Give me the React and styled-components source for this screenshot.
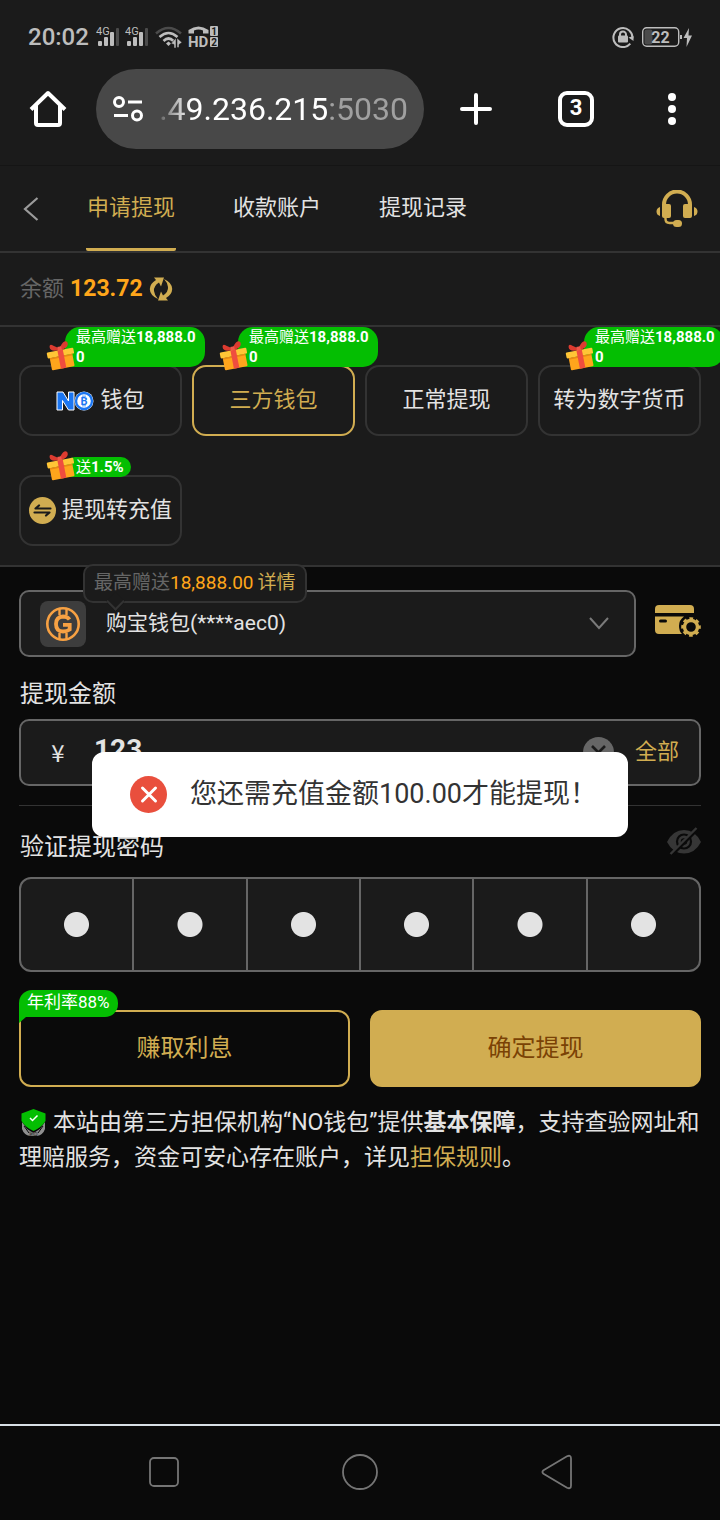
import React, { useState } from "react";
import styled, { createGlobalStyle, ThemeProvider } from "styled-components";

const theme = {
  colors: {
    page: "#0a0a0a",
    panel: "#1b1b1b",
    line: "#333333",
    border: "#666666",
    text: "#e3e3e3",
    muted: "#666666",
    gold: "#d1ad51",
    orange: "#ffa61a",
    green: "#04be02",
    white: "#ffffff",
    status: "#bdbdbd",
  },
};

const GlobalStyle = createGlobalStyle`
  * {
    box-sizing: border-box;
  }
  body {
    margin: 0;
    background: ${theme.colors.page};
    color: ${theme.colors.text};
    font-family: Roboto, "Noto Sans CJK SC", sans-serif;
    line-height: 1.2;
    overflow-x: hidden;
  }
  button, input, select {
    font-family: inherit;
    line-height: inherit;
    color: inherit;
    margin: 0;
  }
  button {
    padding: 0;
    border: 0;
    background: none;
    cursor: pointer;
  }
  svg {
    display: block;
    flex: none;
  }
`;

const Screen = styled.div`
  display: flex;
  flex-direction: column;
  min-height: 100vh;
  overflow: hidden;
`;

/* phone status bar */

const StatusBar = styled.div`
  display: flex;
  align-items: center;
  justify-content: space-between;
  height: 69px;
  padding: 4px 28px 0;
  background: ${({ theme }) => theme.colors.panel};
  color: ${({ theme }) => theme.colors.status};
`;

const StatusGroup = styled.div`
  display: flex;
  align-items: center;
  gap: ${({ $gap }) => $gap}px;
`;

const Clock = styled.span`
  margin-right: 1px;
  font-size: 24px;
  font-weight: 500;
  line-height: 28px;
`;

/* browser toolbar */

const BrowserBar = styled.div`
  display: flex;
  align-items: center;
  height: 97px;
  padding: 0 24px 17px 24px;
  border-bottom: 1px solid #151515;
  background: ${({ theme }) => theme.colors.panel};
  color: ${({ theme }) => theme.colors.white};
`;

const BarButton = styled.button`
  display: flex;
  align-items: center;
  justify-content: center;
  width: 48px;
  height: 48px;
`;

const AddressBar = styled.button`
  display: flex;
  align-items: center;
  justify-content: space-between;
  flex: 1;
  height: 80px;
  margin: 0 28px 0 24px;
  padding: 0 16px;
  border-radius: 40px;
  background: #484848;
`;

const Address = styled.span`
  font-size: 32px;
  line-height: 40px;
  mask-image: linear-gradient(to right, rgba(0, 0, 0, 0.15), #000 32px);
`;

const Port = styled.span`
  color: #a0a0a0;
`;

const BarActions = styled.div`
  display: flex;
  gap: 52px;
`;

const ActionGap = styled.div`
  display: flex;
  gap: 48px;
`;

const TabCount = styled.span`
  display: flex;
  align-items: center;
  justify-content: center;
  width: 36px;
  height: 36px;
  border: 4px solid;
  border-radius: 9px;
  font-size: 22px;
  font-weight: 700;
`;

/* page */

const WebView = styled.main`
  position: relative;
  flex: 1;
`;

const Header = styled.header`
  display: flex;
  align-items: center;
  height: 87px;
  padding: 0 22px 0 23px;
  border-bottom: 2px solid ${({ theme }) => theme.colors.line};
  background: ${({ theme }) => theme.colors.panel};
`;

const BackButton = styled.button`
  width: 16px;
`;

const Tabs = styled.nav`
  display: flex;
  flex: 1;
  gap: 56px;
  height: 100%;
  margin-left: 47px;
`;

const Tab = styled.a`
  display: flex;
  align-items: center;
  justify-content: center;
  width: 90px;
  border-top: 3px solid transparent;
  border-bottom: 3px solid ${({ theme, $active }) => ($active ? theme.colors.gold : "transparent")};
  border-radius: 2px;
  color: ${({ theme, $active }) => ($active ? theme.colors.gold : theme.colors.text)};
  font-size: 22px;
  text-decoration: none;
  white-space: nowrap;
`;

const Balance = styled.div`
  display: flex;
  align-items: center;
  gap: 6px;
  height: 74px;
  padding: 0 20px;
  border-bottom: 2px solid ${({ theme }) => theme.colors.line};
  background: ${({ theme }) => theme.colors.panel};
  color: ${({ theme }) => theme.colors.muted};
  font-size: 22px;
`;

const Amount = styled.strong`
  color: ${({ theme }) => theme.colors.orange};
  font-size: 23px;
`;

const Methods = styled.section`
  display: grid;
  grid-template-columns: repeat(4, 1fr);
  gap: 39px 10px;
  padding: 38px 19px 19px;
  border-bottom: 2px solid ${({ theme }) => theme.colors.line};
  background: ${({ theme }) => theme.colors.panel};
`;

const MethodCell = styled.div`
  position: relative;
`;

const MethodButton = styled.button`
  display: flex;
  align-items: center;
  justify-content: center;
  gap: 6px;
  width: 100%;
  height: 71px;
  border: 2px solid ${({ theme, $active }) => ($active ? theme.colors.gold : theme.colors.line)};
  border-radius: 14px;
  color: ${({ theme, $active }) => ($active ? theme.colors.gold : theme.colors.text)};
  font-size: 22px;
  white-space: nowrap;
`;

const Promo = styled.div`
  position: absolute;
  bottom: calc(100% - 2px);
  left: 46px;
  width: max-content;
  max-width: 140px;
  padding: 0 7px 0 11px;
  border-radius: 15px 15px 15px 0;
  background: ${({ theme }) => theme.colors.green};
  color: ${({ theme }) => theme.colors.white};
  font-size: 15px;
  line-height: 20px;
  word-break: break-all;
`;

const GiftBox = styled.span`
  position: absolute;
  bottom: -4px;
  left: -19px;
`;

const Form = styled.form`
  display: flex;
  flex-direction: column;
  padding: 23px 19px 0;
`;

const AccountRow = styled.div`
  position: relative;
  display: flex;
  align-items: center;
  gap: 19px;
`;

const ManageButton = styled.button`
  padding-bottom: 6px;
`;

const Field = styled.div`
  display: flex;
  align-items: center;
  flex: 1 0 auto;
  height: 67px;
  padding: 0 20px 0 19px;
  border: 2px solid ${({ theme }) => theme.colors.border};
  border-radius: 10px;
  background: ${({ theme }) => theme.colors.panel};
`;

const WalletBadge = styled.span`
  display: flex;
  align-items: center;
  justify-content: center;
  width: 46px;
  height: 46px;
  border-radius: 8px;
  background: #3d3d3d;
`;

const AccountSelect = styled.select`
  flex: 1;
  min-width: 0;
  height: 100%;
  padding: 0 20px;
  border: 0;
  outline: 0;
  appearance: none;
  background: none;
  font-size: 21px;
`;

const SelectArrow = styled.span`
  margin-right: 5px;
`;

const Tip = styled.div`
  position: absolute;
  top: -26px;
  left: 64px;
  display: flex;
  align-items: center;
  gap: 4px;
  height: 39px;
  padding: 0 9px;
  border: 2px solid ${({ theme }) => theme.colors.line};
  border-radius: 10px;
  background: ${({ theme }) => theme.colors.panel};
  color: ${({ theme }) => theme.colors.muted};
  font-size: 19px;
  white-space: nowrap;

  &::after {
    content: "";
    position: absolute;
    bottom: -7px;
    left: 24px;
    width: 11px;
    height: 11px;
    border: solid ${({ theme }) => theme.colors.line};
    border-width: 0 2px 2px 0;
    background: ${({ theme }) => theme.colors.panel};
    transform: rotate(45deg);
  }
`;

const TipAmount = styled.span`
  color: ${({ theme }) => theme.colors.orange};
`;

const GoldLink = styled.a`
  color: ${({ theme }) => theme.colors.gold};
  text-decoration: none;
`;

const FieldLabel = styled.label`
  padding: 20px 1px 8px;
  font-size: 24px;
  line-height: 34px;
`;

const Currency = styled.span`
  width: 36px;
  font-family: "Noto Sans CJK SC", sans-serif;
  font-size: 24px;
  text-align: center;
`;

const AmountInput = styled.input`
  flex: 1;
  min-width: 0;
  padding: 0 18px 6px;
  border: 0;
  outline: 0;
  background: none;
  font-size: 28px;
  font-weight: 700;
`;

const AllButton = styled.button`
  margin-left: 21px;
  color: ${({ theme }) => theme.colors.gold};
  font-size: 22px;
`;

const Divider = styled.hr`
  width: 100%;
  height: 1px;
  margin: 19px 0 4px;
  border: 0;
  background: ${({ theme }) => theme.colors.line};
`;

const LabelRow = styled.div`
  display: flex;
  align-items: center;
  justify-content: space-between;
  padding-bottom: 5px;
`;

const PinRow = styled.div`
  display: flex;
  height: 95px;
  border: 2px solid ${({ theme }) => theme.colors.border};
  border-radius: 12px;
  background: ${({ theme }) => theme.colors.panel};
`;

/* a filled cell shows one large dot in place of the digit */
const PinInput = styled.input`
  flex: 1;
  min-width: 0;
  padding: 0;
  border: 0;
  border-left: ${({ $first }) => ($first ? 0 : "2px")} solid ${({ theme }) => theme.colors.border};
  outline: 0;
  color: transparent;
  text-align: center;
  background: ${({ value }) => (value ? "radial-gradient(circle, #e3e3e3 12px, transparent 13px)" : "none")};
`;

const Actions = styled.div`
  display: grid;
  grid-template-columns: 1fr 1fr;
  gap: 20px;
  margin-top: 38px;
`;

const ActionCell = styled.div`
  position: relative;
`;

const ActionButton = styled.button`
  width: 100%;
  height: 77px;
  border: 2px solid ${({ theme }) => theme.colors.gold};
  border-radius: 12px;
  background: ${({ theme, $filled }) => ($filled ? theme.colors.gold : "none")};
  color: ${({ theme, $filled }) => ($filled ? "#7a4205" : theme.colors.gold)};
  font-size: 24px;
`;

const RateTag = styled.span`
  position: absolute;
  top: -20px;
  left: 0;
  height: 27px;
  padding: 0 8px;
  border-radius: 13px 13px 13px 0;
  background: ${({ theme }) => theme.colors.green};
  color: ${({ theme }) => theme.colors.white};
  font-size: 17px;
  line-height: 25px;

  &::after {
    content: "";
    position: absolute;
    top: 100%;
    left: 0;
    border-top: 6px solid ${({ theme }) => theme.colors.green};
    border-right: 7px solid transparent;
  }
`;

const Notice = styled.p`
  margin: 18px 0 0;
  font-size: 23px;
  line-height: 35px;

  & > svg {
    display: inline-block;
    margin: 0 7px 0 2px;
    vertical-align: -7px;
  }
`;

const ToastLayer = styled.div`
  position: absolute;
  inset: 0;
  display: flex;
  align-items: center;
  justify-content: center;
  padding-bottom: 2px;
  pointer-events: none;
`;

const Toast = styled.div`
  display: flex;
  align-items: center;
  gap: 23px;
  height: 85px;
  padding: 0 31px 0 38px;
  border-radius: 12px;
  background: ${({ theme }) => theme.colors.white};
  color: #333333;
  font-size: 27px;
  white-space: nowrap;
`;

/* system navigation */

const SystemNav = styled.nav`
  display: flex;
  align-items: center;
  justify-content: space-around;
  height: 96px;
  padding: 0 65px 2px 67px;
  border-top: 2px solid #d8dfe6;
`;

const SignalIcon = () => (
  <svg width="23" height="22" viewBox="0 0 23 22" fill="#bdbdbd">
    <text x="0" y="9" fontSize="11">4G</text>
    <rect x="2" y="15" width="4" height="5" rx="1" />
    <rect x="8" y="11" width="4" height="9" rx="1" />
    <rect x="14" y="6" width="4" height="14" rx="1" />
    <rect x="20" y="2" width="3" height="18" rx="1" fill="#4b4b4b" />
  </svg>
);

const WifiIcon = () => (
  <svg width="28" height="22" viewBox="0 0 28 22" fill="none" strokeWidth="2.600">
    <path d="M2 7.500Q14.500-3.500 27 7.500" stroke="#4b4b4b" />
    <path d="M5.500 11Q14.500 3 23.500 11" stroke="#bdbdbd" />
    <path d="M9.500 15Q14.500 10 19.500 15" stroke="#bdbdbd" />
    <path d="M12 17.500L14.500 15.500L17 17.500L14.500 20Z" fill="#bdbdbd" />
    <path d="M17 17.500L22 12V22H20V18.500ZM23 12L28 16.500L25 18.500V21.500H23Z" fill="#bdbdbd" stroke="#1b1b1b" strokeWidth="0.500" />
  </svg>
);

const HdIcon = () => (
  <svg width="31" height="24" viewBox="0 0 31 24">
    <path d="M0.500 8.500V5Q10.500-2 20.500 5V8.500H15V5.500Q10.500 3.500 6 5.500V8.500Z" fill="#bdbdbd" />
    <text x="0" y="22" fontSize="15" fontWeight="700" fill="#bdbdbd">HD</text>
    <rect x="22" y="1" width="8" height="10" rx="1" fill="#bdbdbd" />
    <rect x="22" y="12" width="8" height="10" rx="1" fill="#bdbdbd" />
    <text x="26" y="9.500" fontSize="10" fontWeight="700" textAnchor="middle" fill="#1b1b1b">1</text>
    <text x="26" y="20.500" fontSize="10" fontWeight="700" textAnchor="middle" fill="#1b1b1b">2</text>
  </svg>
);

const RotationLockIcon = () => (
  <svg width="22" height="22" viewBox="0 0 22 22" fill="none" stroke="#bdbdbd" strokeWidth="2">
    <path d="M18.300 17.600A9.500 9.500 0 1 1 20.400 12.500" />
    <path d="M16.500 11.500L21.500 10V15Z" fill="#bdbdbd" stroke="none" />
    <rect x="6" y="9.500" width="10" height="7" rx="1" fill="#bdbdbd" stroke="none" />
    <path d="M8 10V8.500A3 3 0 0 1 14 8.500V10" />
  </svg>
);

const BatteryIcon = () => (
  <svg width="50" height="22" viewBox="0 0 50 22">
    <rect x="0.700" y="1.700" width="36" height="18.600" rx="4" fill="none" stroke="#bdbdbd" strokeWidth="1.400" />
    <rect x="2.500" y="3.500" width="8" height="15" rx="2" fill="#4b4b4b" />
    <rect x="38" y="9" width="2" height="4" fill="#bdbdbd" />
    <text x="18.500" y="16.500" fontSize="16" fontWeight="700" textAnchor="middle" fill="#bdbdbd">22</text>
    <path d="M47 2L41.500 12H45L44.500 21L50 9.500H46.500Z" fill="#bdbdbd" />
  </svg>
);

const HomeIcon = () => (
  <svg width="38" height="38" viewBox="0 0 38 38" fill="none" stroke="#fff" strokeWidth="4" strokeLinejoin="round">
    <path d="M2 19.500L19 3L36 19.500M7 15.500V33Q7 35 9 35H29Q31 35 31 33V15.500" />
  </svg>
);

const SiteInfoIcon = () => (
  <svg width="32" height="28" viewBox="0 0 32 28" fill="none" stroke="#fff" strokeWidth="3">
    <circle cx="7" cy="7" r="4.500" />
    <path d="M16 7H30M2 20.500H16" />
    <circle cx="25" cy="20.500" r="4.500" />
  </svg>
);

const PlusIcon = () => (
  <svg width="32" height="32" viewBox="0 0 32 32" stroke="#fff" strokeWidth="4" strokeLinecap="round">
    <path d="M16 2V30M2 16H30" />
  </svg>
);

const MoreIcon = () => (
  <svg width="8" height="32" viewBox="0 0 8 32" fill="#fff">
    <circle cx="4" cy="4" r="4" />
    <circle cx="4" cy="16" r="4" />
    <circle cx="4" cy="28" r="4" />
  </svg>
);

const BackIcon = () => (
  <svg width="16" height="24" viewBox="0 0 16 24" fill="none" stroke="#9b9b9b" strokeWidth="2.200">
    <path d="M14.500 1L2 12L14.500 23" />
  </svg>
);

const HeadsetIcon = () => (
  <svg width="42" height="38" viewBox="0 0 42 38" fill="#d1ad51">
    <path d="M8 16V14.500A13 13 0 0 1 34 14.500V16" fill="none" stroke="#d1ad51" strokeWidth="4" />
    <rect x="6" y="14" width="9" height="14" rx="2" />
    <rect x="27" y="14" width="9" height="14" rx="2" />
    <path d="M4 17V26Q0.500 25 0.500 21.500Q0.500 18 4 17ZM38 17V26Q41.500 25 41.500 21.500Q41.500 18 38 17Z" />
    <path d="M9.500 27V29Q9.500 33 13.500 33H18" fill="none" stroke="#d1ad51" strokeWidth="2.400" />
    <rect x="17" y="30" width="9" height="7" rx="3.500" />
  </svg>
);

const RefreshIcon = () => (
  <svg width="24" height="24" viewBox="0 0 24 24" fill="#d1ad51">
    <path d="M5 0.500H15L12 9.500L10 5.500Q4.500 9 5 14Q5.500 18.500 9 22Q1 18.500 0.800 12Q1 6.500 7 3Z" />
    <path d="M19 23.500H9L12 14.500L14 18.500Q19.500 15 19 10Q18.500 5.500 15 2Q23 5.500 23.200 12Q23 17.500 17 21Z" />
  </svg>
);

const GiftIcon = () => (
  <svg width="30" height="30" viewBox="0 0 30 30">
    <g transform="rotate(-11 15 15)">
      <path d="M14 9Q5 9 5.500 4Q6 0.500 9.500 3.500Q13 5.500 14.500 8Q18 2.500 21 1.500Q24.500 1 24 4.500Q23 9 15 9Z" fill="#dd3b30" />
      <path d="M13 5.500H17V9.500H13Z" fill="#f0574a" />
      <rect x="3.500" y="15" width="23" height="12.500" rx="1" fill="#ffa51c" />
      <rect x="1.500" y="9" width="27" height="6" rx="1" fill="#ffc536" />
      <rect x="3.500" y="15" width="23" height="1.500" fill="#e88a13" />
      <rect x="12.500" y="9" width="5.500" height="18.500" fill="#ef4d3f" />
    </g>
  </svg>
);

const NoLogo = () => (
  <svg width="38" height="20" viewBox="0 0 38 20">
    <path d="M1 19V1H7L12.500 10V1H18V19H12.500L6.500 9.500V19Z" fill="#1b76f2" stroke="#fff" strokeWidth="1" />
    <circle cx="28" cy="10" r="9.500" fill="#fff" />
    <circle cx="28" cy="10" r="8" fill="none" stroke="#1b76f2" strokeWidth="2.400" />
    <text x="28" y="14" fontSize="11" fontWeight="700" textAnchor="middle" fill="#1b76f2">B</text>
    <path d="M27 4.500V6M29 4.500V6M27 14V15.500M29 14V15.500" stroke="#1b76f2" />
  </svg>
);

const SwapIcon = () => (
  <svg width="27" height="27" viewBox="0 0 27 27">
    <circle cx="13.500" cy="13.500" r="13.500" fill="#d1ad51" />
    <path d="M10 8.500L6.500 11.500H21.500M5.500 15.500H20.500L17 18.500" fill="none" stroke="#1b1b1b" strokeWidth="2.200" strokeLinejoin="round" strokeLinecap="round" />
  </svg>
);

const GCoinIcon = () => (
  <svg width="36" height="36" viewBox="0 0 36 36" fill="none" stroke="#f7a143">
    <circle cx="18" cy="18" r="15.700" strokeWidth="2.600" />
    <path d="M14.500 3V9M21.500 3V9M14.500 27V33M21.500 27V33" strokeWidth="2.400" />
    <path d="M24.500 13.500Q22.500 10.500 18 10.500Q11 11 11 18Q11 25.500 18 25.500Q22 25.500 24.700 23.500V18.800H18" strokeWidth="3.800" />
  </svg>
);

const ChevronIcon = () => (
  <svg width="20" height="13" viewBox="0 0 20 13" fill="none" stroke="#7a7a7a" strokeWidth="2">
    <path d="M1 1L10 11L19 1" />
  </svg>
);

const CardSettingsIcon = () => (
  <svg width="46" height="32" viewBox="0 0 46 32">
    <path d="M0 8V4Q0 0 4 0H35Q39 0 39 4V8Z" fill="#d1ad51" />
    <path d="M0 11.500H29Q24 15 24 21Q24 26 27 29H4Q0 29 0 25Z" fill="#d1ad51" />
    <rect x="4" y="14.500" width="8" height="3" rx="1.500" fill="#0a0a0a" />
    <circle cx="36" cy="22" r="6.500" fill="none" stroke="#d1ad51" strokeWidth="3.400" />
    <circle cx="36" cy="22" r="8.300" fill="none" stroke="#d1ad51" strokeWidth="3" strokeDasharray="3.600 2.919" strokeDashoffset="1.800" />
  </svg>
);

const ClearIcon = () => (
  <svg width="31" height="31" viewBox="0 0 31 31">
    <circle cx="15.500" cy="15.500" r="15.500" fill="#666" />
    <path d="M9 9L22 22M22 9L9 22" stroke="#1b1b1b" strokeWidth="2.600" />
  </svg>
);

const HiddenEyeIcon = () => (
  <svg width="34" height="28" viewBox="0 0 34 28">
    <path d="M0 15Q6 3 17 3Q28 3 34 15Q28 26.500 17 26.500Q6 26.500 0 15Z" fill="#363636" />
    <circle cx="17" cy="14.500" r="7" fill="none" stroke="#0a0a0a" strokeWidth="2.200" />
    <circle cx="17" cy="14.500" r="2.500" fill="none" stroke="#0a0a0a" strokeWidth="1.500" />
    <path d="M5 28L31 2" stroke="#0a0a0a" strokeWidth="3" />
    <path d="M3.500 27L29.500 1" stroke="#363636" strokeWidth="2.400" />
  </svg>
);

const ErrorIcon = () => (
  <svg width="37" height="37" viewBox="0 0 37 37">
    <circle cx="18.500" cy="18.500" r="18.500" fill="#e94f3d" />
    <path d="M12.500 12L25.500 25M25.500 12L12.500 25" stroke="#fff" strokeWidth="3" strokeLinecap="round" />
  </svg>
);

const ShieldIcon = () => (
  <svg width="25" height="28" viewBox="0 0 25 28">
    <path d="M1 13L6 20L12.500 24L19 20L24 13V20Q22 26 16 27H9Q3 26 1 20Z" fill="#8f8f8f" />
    <path d="M3 17L8 24M22 17L17 24" stroke="#0a0a0a" />
    <text x="12.500" y="27" fontSize="6" fontWeight="700" textAnchor="middle" fill="#d0d0d0" stroke="#0a0a0a" strokeWidth="0.400">NO</text>
    <path d="M12.500 0L24.500 4.500V12Q21 18 12.500 22Q4 18 0.500 12V4.500Z" fill="#04be02" />
    <path d="M9 9L11.500 11.500L16.500 6.500" fill="none" stroke="#fff" strokeWidth="1.500" />
  </svg>
);

const RecentsIcon = () => (
  <svg width="30" height="30" viewBox="0 0 30 30" fill="none" stroke="#757575" strokeWidth="1.800">
    <rect x="1" y="1" width="28" height="28" rx="4" />
  </svg>
);

const CircleIcon = () => (
  <svg width="36" height="36" viewBox="0 0 36 36" fill="none" stroke="#757575" strokeWidth="1.800">
    <circle cx="18" cy="18" r="17" />
  </svg>
);

const TriangleIcon = () => (
  <svg width="32" height="36" viewBox="0 0 32 36" fill="none" stroke="#757575" strokeWidth="1.800">
    <path d="M2.500 16.200L26 2.300Q30 0.500 30 4.500V31.500Q30 35.500 26 33.700L2.500 19.800Q0.300 18 2.500 16.200Z" />
  </svg>
);

const tabs = ["申请提现", "收款账户", "提现记录"];

const methods = [
  { label: "钱包", icon: <NoLogo />, promo: "最高赠送", value: "18,888.00" },
  { label: "三方钱包", promo: "最高赠送", value: "18,888.00" },
  { label: "正常提现" },
  { label: "转为数字货币", promo: "最高赠送", value: "18,888.00" },
  { label: "提现转充值", icon: <SwapIcon />, promo: "送", value: "1.5%" },
];

const App = () => {
  const [method, setMethod] = useState("三方钱包");
  const [amount, setAmount] = useState("123");
  const [pin, setPin] = useState(["1", "2", "3", "4", "5", "6"]);

  const updatePin = (index, value) => {
    setPin(pin.map((digit, i) => (i === index ? value : digit)));
  };

  return (
    <ThemeProvider theme={theme}>
      <GlobalStyle />
      <Screen>
        <StatusBar>
          <StatusGroup $gap={6}>
            <Clock>20:02</Clock>
            <SignalIcon />
            <SignalIcon />
            <WifiIcon />
            <HdIcon />
          </StatusGroup>
          <StatusGroup $gap={8}>
            <RotationLockIcon />
            <BatteryIcon />
          </StatusGroup>
        </StatusBar>

        <BrowserBar>
          <BarButton aria-label="Home">
            <HomeIcon />
          </BarButton>
          <AddressBar>
            <SiteInfoIcon />
            <Address>
              .49.236.215<Port>:5030</Port>
            </Address>
          </AddressBar>
          <BarActions>
            <BarButton aria-label="New tab">
              <PlusIcon />
            </BarButton>
            <ActionGap>
              <BarButton aria-label="Tabs">
                <TabCount>3</TabCount>
              </BarButton>
              <BarButton aria-label="More">
                <MoreIcon />
              </BarButton>
            </ActionGap>
          </BarActions>
        </BrowserBar>

        <WebView>
          <Header>
            <BackButton aria-label="返回">
              <BackIcon />
            </BackButton>
            <Tabs>
              {tabs.map((tab, index) => (
                <Tab key={tab} href="#" $active={index === 0}>
                  {tab}
                </Tab>
              ))}
            </Tabs>
            <button aria-label="客服">
              <HeadsetIcon />
            </button>
          </Header>

          <Balance>
            余额
            <Amount>123.72</Amount>
            <button aria-label="刷新">
              <RefreshIcon />
            </button>
          </Balance>

          <Methods>
            {methods.map((item) => (
              <MethodCell key={item.label}>
                <MethodButton $active={item.label === method} onClick={() => setMethod(item.label)}>
                  {item.icon}
                  {item.label}
                </MethodButton>
                {item.promo && (
                  <Promo>
                    <GiftBox>
                      <GiftIcon />
                    </GiftBox>
                    {item.promo}
                    <b>{item.value}</b>
                  </Promo>
                )}
              </MethodCell>
            ))}
          </Methods>

          <Form onSubmit={(e) => e.preventDefault()}>
            <AccountRow>
              <Field>
                <WalletBadge>
                  <GCoinIcon />
                </WalletBadge>
                <AccountSelect aria-label="收款账户">
                  <option>购宝钱包(****aec0)</option>
                </AccountSelect>
                <SelectArrow>
                  <ChevronIcon />
                </SelectArrow>
              </Field>
              <ManageButton type="button" aria-label="管理账户">
                <CardSettingsIcon />
              </ManageButton>
              <Tip>
                <span>
                  最高赠送<TipAmount>18,888.00</TipAmount>
                </span>
                <GoldLink href="#">详情</GoldLink>
              </Tip>
            </AccountRow>

            <FieldLabel htmlFor="amount">提现金额</FieldLabel>
            <Field>
              <Currency>¥</Currency>
              <AmountInput id="amount" value={amount} onChange={(e) => setAmount(e.target.value)} />
              <button type="button" aria-label="清除" onClick={() => setAmount("")}>
                <ClearIcon />
              </button>
              <AllButton type="button" onClick={() => setAmount("123")}>
                全部
              </AllButton>
            </Field>
            <Divider />

            <LabelRow>
              <FieldLabel htmlFor="pin-0">验证提现密码</FieldLabel>
              <button type="button" aria-label="显示密码">
                <HiddenEyeIcon />
              </button>
            </LabelRow>
            <PinRow>
              {pin.map((digit, index) => (
                <PinInput
                  key={index}
                  id={`pin-${index}`}
                  type="password"
                  maxLength={1}
                  aria-label={`密码 ${index + 1}`}
                  value={digit}
                  $first={index === 0}
                  onChange={(e) => updatePin(index, e.target.value)}
                />
              ))}
            </PinRow>

            <Actions>
              <ActionCell>
                <ActionButton type="button">赚取利息</ActionButton>
                <RateTag>年利率88%</RateTag>
              </ActionCell>
              <ActionButton $filled>确定提现</ActionButton>
            </Actions>

            <Notice>
              <ShieldIcon />
              本站由第三方担保机构“NO钱包”提供<b>基本保障</b>，支持查验网址和理赔服务，资金可安心存在账户，详见
              <GoldLink href="#">担保规则</GoldLink>。
            </Notice>
          </Form>

          <ToastLayer>
            <Toast role="alert">
              <ErrorIcon />
              您还需充值金额100.00才能提现！
            </Toast>
          </ToastLayer>
        </WebView>

        <SystemNav>
          <button aria-label="Recents">
            <RecentsIcon />
          </button>
          <button aria-label="Home screen">
            <CircleIcon />
          </button>
          <button aria-label="Back">
            <TriangleIcon />
          </button>
        </SystemNav>
      </Screen>
    </ThemeProvider>
  );
};

export default App;
